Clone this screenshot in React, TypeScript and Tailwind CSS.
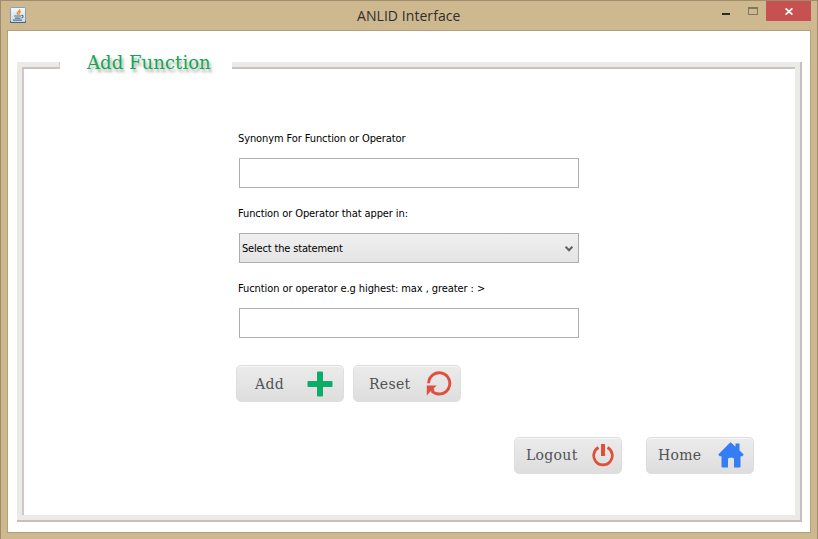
import React from 'react';

const labelFont = "font-['DejaVu_Sans_Condensed','DejaVu_Sans',sans-serif] [font-stretch:condensed] text-[11px] leading-[14px] text-black whitespace-nowrap";

function JavaIcon() {
  return (
    <svg width="16" height="16" viewBox="0 0 16 16" fill="none">
      <defs>
        <linearGradient id="java" x2="0" y2="1">
          <stop stopColor="#f7f9fa" />
          <stop offset="1" stopColor="#c8d7e1" />
        </linearGradient>
      </defs>
      <rect x=".5" y=".5" width="15" height="15" rx="1" fill="url(#java)" stroke="#8a9faf" />
      <path d="M.5 14v1.5h15V14" stroke="#42627d" />
      <path d="M9.7 2.3C10.2 4 6 4.7 7.5 7.5M10.8 4.4C8.5 5.2 9.8 6 8.5 7.8" stroke="#e7862e" strokeWidth="1.3" />
      <path d="M4 9h7M5 11.2h5.5M3 13.2h9M11.3 8.5c2.5-.7 2.2 1.8.2 2.3" stroke="#52738e" strokeWidth="1.2" />
    </svg>
  );
}

function PlusIcon() {
  return (
    <svg width="26" height="26" viewBox="0 0 26 26">
      <path d="M11 .5h4a1 1 0 0 1 1 1V10h8.500a1 1 0 0 1 1 1v4a1 1 0 0 1-1 1H16v8.500a1 1 0 0 1-1 1h-4a1 1 0 0 1-1-1V16H1.500a1 1 0 0 1-1-1v-4a1 1 0 0 1 1-1H10V1.500a1 1 0 0 1 1-1Z" fill="#0eac66" />
    </svg>
  );
}

function ResetIcon() {
  return (
    <svg width="26" height="26" viewBox="0 0 26 26" fill="none">
      <path d="M2.600 12.200A10.600 10.600 0 1 1 5.800 20" stroke="#e04f3b" strokeWidth="2.900" />
      <path d="M.8 14.500h10L7.500 17.600l1 1.400-2.300 2.300-1.300-1.300L.8 24.500Z" fill="#e04f3b" />
    </svg>
  );
}

function PowerIcon() {
  return (
    <svg width="22" height="24" viewBox="0 0 22 24" fill="none">
      <path d="M6.500 4.500a9.300 9.300 0 1 0 9 0" stroke="#e04f3b" strokeWidth="2.700" />
      <path d="M9 1h4v12H9Z" fill="#e04f3b" />
    </svg>
  );
}

function HomeIcon() {
  return (
    <svg width="26" height="26" viewBox="0 0 26 26">
      <path d="M13 .4 17.500 4.700V1.600H21.500V8.500L25.700 12.500 24.400 14.300H22.500V24.500Q22.500 25.500 21.500 25.500H16V17.500Q16 15.700 14.500 15.700H11.500Q10 15.700 10 17.500V25.500H4.500Q3.500 25.500 3.500 24.500V14.300H1.600L.3 12.500 11.900.8Q12.500.2 13 .4Z" fill="#347df5" />
    </svg>
  );
}

function ActionButton({ label, className, children }: { label: string; className: string; children: React.ReactNode }) {
  return (
    <button className={"flex h-[37px] w-[108px] items-center justify-between rounded-[5px] border border-[#dedede] bg-gradient-to-b from-[#ebebeb] to-[#dedede] font-['DejaVu_Serif',serif] text-[14px] leading-5 font-normal tracking-[0.300px] text-[#505255] shadow-[inset_0_1px_0_#f6f6f6] " + className}>
      <span className="whitespace-nowrap">{label}</span>
      {children}
    </button>
  );
}

export default function App() {
  return (
    <div className="flex h-[539px] w-[818px] flex-col overflow-hidden border-t border-r border-l border-[#9e8c6c] bg-[#cdb88f]">
      <header className="flex h-[29px] shrink-0 items-start pl-[9px]">
        <div className="mt-[6px] w-[160px]"><JavaIcon /></div>
        <h1 className="mt-[5px] ml-[187px] w-[200px] font-['Open_Sans',sans-serif] text-[14px] leading-5 font-normal tracking-[0.060px] text-[#302f2c]">ANLID Interface</h1>
        <div className="ml-auto flex items-start pr-[6px]">
          <span className="mt-[12px] mr-[18px] h-[2px] w-[8px] bg-[#292929]" />
          <span className="mt-[6px] mr-[8px] h-[8px] w-[10px] border border-t-2 border-[#80765f]" />
          <button className="flex h-5 w-[45px] items-center justify-center bg-[#c75050]" aria-label="Close">
            <svg width="8" height="7" viewBox="0 0 8 7" stroke="white" strokeWidth="1.600"><path d="m.6.300 6.800 6.400M7.400.300.600 6.700" /></svg>
          </button>
        </div>
      </header>

      <main className="mx-[6px] mb-[6px] flex grow flex-col border border-[#b3a07b] bg-white pt-[31px] pr-[8px] pb-[10px] pl-[9px]">
        <div className="flex h-[7px] shrink-0 items-start">
          <div className="h-[7px] w-[5px] bg-[#eaeae6]" />
          <div className="h-[7px] w-[38px] border-r border-b-2 border-r-[#d2cccb] border-b-[#cac2c0] bg-[#eaeae6]" />
          <div className="w-[172px] pl-[27px]">
            <h2 className="-mt-[12px] font-['DejaVu_Serif',serif] text-[18px] leading-[26px] tracking-[0.070px] whitespace-nowrap text-[#12a657] [text-shadow:2px_3px_3px_#a4aa9c]">Add Function</h2>
          </div>
          <div className="h-[7px] grow border-b-2 border-[#cac2c0] bg-[#eaeae6]" />
          <div className="h-[7px] w-[7px] border-r-2 border-[#c8bfbd] bg-[#eaeae6]" />
        </div>
        <div className="flex grow border-r-2 border-b-2 border-[#c8bfbd]">
          <div className="flex grow border-r-[5px] border-b-[5px] border-l-[5px] border-[#eaeae6]">
            <div className="flex grow flex-col border-l-2 border-[#cfc7c5]">
              <form className="ml-[215px] flex w-[340px] flex-col pt-[63px]" onSubmit={(e) => e.preventDefault()}>
                <label className={labelFont + " -ml-px tracking-[-0.100px]"}>Synonym For Function or Operator</label>
                <input aria-label="Synonym" className="mt-[12px] h-[30px] border border-[#abadb3] bg-white px-1 outline-none" />
                <label className={labelFont + " mt-[19px] -ml-px tracking-[-0.100px]"}>Function or Operator that apper in:</label>
                <button className="mt-[12px] flex h-[30px] items-center justify-between border border-[#acacac] bg-gradient-to-b from-[#f0f0f0] to-[#e4e4e4] pr-[5px] pl-[2px]">
                  <span className={labelFont + " pt-px tracking-[-0.170px]"}>Select the statement</span>
                  <svg width="8" height="7" viewBox="0 0 8 7" fill="none" stroke="#606060" strokeWidth="2"><path d="m.6 1.700 3.400 3.600 3.400-3.600" /></svg>
                </button>
                <label className={labelFont + " mt-[19px] -ml-px tracking-[-0.080px]"}>Fucntion or operator e.g highest: max , greater : &gt;</label>
                <input aria-label="Function" className="mt-[12px] h-[30px] border border-[#abadb3] bg-white px-1 outline-none" />
              </form>
              <div className="mt-[27px] ml-[212px] flex gap-[9px]">
                <ActionButton label="Add" className="pr-[10px] pl-[18px]"><PlusIcon /></ActionButton>
                <ActionButton label="Reset" className="pr-[8px] pl-[15px]"><ResetIcon /></ActionButton>
              </div>
              <div className="mt-[35px] ml-[490px] flex gap-[24px]">
                <ActionButton label="Logout" className="pr-[7px] pb-px pl-[11px]"><PowerIcon /></ActionButton>
                <ActionButton label="Home" className="pr-[9px] pb-[2px] pl-[11px]"><HomeIcon /></ActionButton>
              </div>
            </div>
          </div>
        </div>
      </main>
    </div>
  );
}
